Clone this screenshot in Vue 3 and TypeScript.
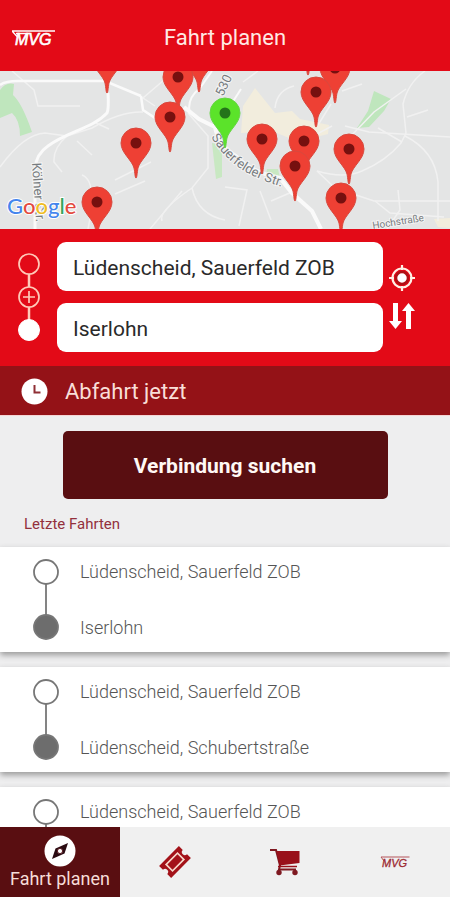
<script setup lang="ts">
import { ref } from 'vue'

interface Pin {
  x: number
  y: number
  color?: string
}

interface Trip {
  from: string
  to: string
}

const start = ref('Lüdenscheid, Sauerfeld ZOB')
const destination = ref('Iserlohn')

const pins: Pin[] = [
  { x: 107, y: -13 },
  { x: 199, y: -14 },
  { x: 178, y: 6 },
  { x: 170, y: 46 },
  { x: 136, y: 72 },
  { x: 97, y: 131 },
  { x: 225, y: 42, color: '#5be32a' },
  { x: 308, y: -31 },
  { x: 335, y: -3 },
  { x: 316, y: 21 },
  { x: 262, y: 68 },
  { x: 304, y: 70 },
  { x: 295, y: 95 },
  { x: 349, y: 78 },
  { x: 341, y: 127 },
]

const trips: Trip[] = [
  { from: 'Lüdenscheid, Sauerfeld ZOB', to: 'Iserlohn' },
  { from: 'Lüdenscheid, Sauerfeld ZOB', to: 'Lüdenscheid, Schubertstraße' },
  { from: 'Lüdenscheid, Sauerfeld ZOB', to: 'Iserlohn' },
]

function swapStops() {
  const previous = start.value
  start.value = destination.value
  destination.value = previous
}
</script>

<template>
  <div class="app">
    <header class="header">
      <svg class="brand" viewBox="0 0 44 18" role="img" aria-label="MVG">
        <path d="M0 2H43M0 2L5 7.500M4 4.500H18" stroke="#fff" stroke-width="1.3" fill="none" />
        <text x="3" y="16" class="brand-text" fill="#fff">MVG</text>
      </svg>
      <h1 class="title">Fahrt planen</h1>
    </header>

    <section class="map" aria-label="Karte">
      <svg class="map-canvas" viewBox="0 0 450 158" preserveAspectRatio="xMidYMid slice">
        <rect width="450" height="158" fill="#e4e5e5" />
        <path d="M0 19Q6 11 14 13L13 24Q22 32 32 61L20 65Q20 49 12 42L0 47Z" fill="#bfe6bd" />
        <path d="M374 20L391 28L384 40L369 56L357 57L368 40Z" fill="#bfe6bd" />
        <path d="M212 72L222 74L222 106L216 108Z" fill="#c8e8c2" />
        <path d="M267 98L278 98L280 107L266 105Z" fill="#c8e8c2" />
        <path d="M255 17L267 32L275 42L292 40L300 48L329 54L328 63L312 67L305 92L289 67L272 60L241 62L243 35Z" fill="#f2eddd" />
        <path d="M434 148L450 147V157L438 156Z" fill="#f2eddd" />
        <g fill="none" stroke="#f1f1f1" stroke-width="1.5">
          <path d="M0 96Q24 63 45 62L67 65L92 57Q121 40 143 41" />
          <path d="M67 65Q53 77 54 91L62 101M77 70L92 84M96 52L109 58M12 0L34 19L38 35H80" />
          <path d="M155 35L143 27L164 9M188 42L208 65V97L192 117Q158 140 162 150M192 117Q198 144 225 149" />
          <path d="M82 104Q98 110 88 158M150 158L182 120M115 109L151 91M115 123L145 110" />
          <path d="M225 116L247 119L239 155M260 120L271 149M271 130L292 121" />
          <path d="M317 100Q344 108 362 100Q386 90 401 72L406 62L403 33Q408 12 425 0" />
          <path d="M345 55L369 61L450 66M405 65Q435 80 438 111V150M406 18L374 41L351 65M362 13L342 20M331 33L318 54" />
          <path d="M317 100L335 117L374 130H450M332 55L317 63L309 91M402 71L378 57" />
          <path d="M243 11L258 0M275 37Q277 19 294 15M375 130L390 142L444 146M428 39L407 46M387 158L400 139L398 119" />
        </g>
        <g fill="none" stroke="#fafafa">
          <path d="M0 14Q5 10 18 10H105L141 25M141 25L143 39L155 47" stroke-width="2.5" />
          <path d="M108 22Q109 38 107 42C92 58 68 60 48 75Q36 83 35 98V158" stroke-width="3" />
          <path d="M184 36L199 48L215 56Q218 74 237 86Q251 101 280 107L292 122L312 140L321 158" stroke-width="4" />
          <path d="M190 43Q186 28 200 17L212 0M225 43L241 18" stroke-width="2" />
        </g>
        <path id="sauerfelder" d="M211 66Q222 84 238 96T292 119" fill="none" />
        <g class="street">
          <text>
            <textPath href="#sauerfelder">Sauerfelder Str.</textPath>
          </text>
          <text transform="translate(223 26) rotate(-65)">530</text>
          <text transform="translate(32 92) rotate(86)">Kölner Str.</text>
          <text class="street-small" transform="translate(373 158) rotate(-9)">Hochstraße</text>
        </g>
        <g v-for="(pin, index) in pins" :key="index" :transform="`translate(${pin.x} ${pin.y})`">
          <path
            d="M0 35C-1 35-1 30-2 25C-4 17-15 10-15 0A15 15 0 0 1 15 0C15 10 4 17 2 25C1 30 1 35 0 35Z"
            :fill="pin.color ?? '#ee4034'"
            :stroke="pin.color ? '#66d544' : '#d8493e'"
            stroke-width="1"
          />
          <circle r="5.5" :fill="pin.color ? '#24731a' : '#76100f'" />
        </g>
        <text class="google" x="7" y="143">
          <tspan fill="#4485ed">G</tspan><tspan fill="#e34a3f">o</tspan><tspan fill="#efbd25">o</tspan><tspan fill="#4485ed">g</tspan><tspan fill="#36a45a">l</tspan><tspan fill="#e34a3f">e</tspan>
        </text>
      </svg>
    </section>

    <form class="planner" @submit.prevent>
      <button class="icon-button" type="button" aria-label="Zwischenhalt hinzufügen">
        <svg width="24" height="90" viewBox="0 0 24 90" fill="none" stroke="#ffc9b8" stroke-width="1.7">
          <circle cx="12" cy="12" r="10" />
          <circle cx="12" cy="45" r="10" />
          <path d="M12 22V35M12 55V68" stroke-width="2.5" />
          <path d="M6 45H18M12 39V51" />
          <circle cx="12" cy="78" r="10.5" fill="#fff" stroke="#fff" stroke-width="1" />
        </svg>
      </button>
      <div class="fields">
        <input v-model="start" class="field" type="text" aria-label="Start" />
        <input v-model="destination" class="field" type="text" aria-label="Ziel" />
      </div>
      <div class="tools">
        <button class="icon-button" type="button" aria-label="Standort verwenden">
          <svg width="26" height="26" viewBox="0 0 26 26" fill="none" stroke="#fff0e6">
            <circle cx="13" cy="13" r="9.5" stroke-width="2.2" />
            <path d="M13 0V5M13 21V26M0 13H5M21 13H26" stroke-width="2.2" />
            <circle cx="13" cy="13" r="6" fill="#fff" stroke="#b01015" stroke-width="2.5" />
          </svg>
        </button>
        <button class="icon-button" type="button" aria-label="Start und Ziel tauschen" @click="swapStops">
          <svg width="26" height="26" viewBox="0 0 26 26" fill="#fff">
            <path d="M4 0H9V18H13L6.500 26L0 18H4ZM17 26H22V8H26L19.500 0L13 8H17Z" />
          </svg>
        </button>
      </div>
    </form>

    <button class="departure" type="button">
      <svg width="27" height="27" viewBox="0 0 27 27">
        <circle cx="13.500" cy="13.500" r="13" fill="#fff" />
        <path d="M13.500 7V14.500H19.500" fill="none" stroke="#8f2f35" stroke-width="2" />
      </svg>
      <span>Abfahrt jetzt</span>
    </button>

    <main class="content">
      <button class="search" type="button">Verbindung suchen</button>
      <h2 class="recent-title">Letzte Fahrten</h2>
      <ul class="trips">
        <li v-for="(trip, index) in trips" :key="index" class="trip">
          <svg class="trip-line" width="26" height="82" viewBox="0 0 26 82" stroke="#777" stroke-width="1.8">
            <circle cx="13" cy="13" r="12" fill="#fff" />
            <path d="M13 25V57" />
            <circle cx="13" cy="68" r="12" fill="#6d6d6d" />
          </svg>
          <div class="stops">
            <span>{{ trip.from }}</span>
            <span>{{ trip.to }}</span>
          </div>
        </li>
      </ul>
    </main>

    <nav class="tabs">
      <button class="tab active" type="button" aria-current="page">
        <svg width="32" height="32" viewBox="0 0 32 32">
          <circle cx="16" cy="16" r="15.500" fill="#fff" />
          <path d="M24 8L20.500 18.500L8 24L11.500 13.500Z" fill="#2b0b12" />
          <circle cx="16" cy="16" r="2.600" fill="#fff" stroke="#5a1a20" />
        </svg>
        <span>Fahrt planen</span>
      </button>
      <button class="tab" type="button" aria-label="Tickets">
        <svg width="32" height="32" viewBox="0 0 32 32">
          <g transform="rotate(-45 16 16)">
            <path d="M2 7.500H30V13A3 3 0 0 0 30 19V24.500H2V19A3 3 0 0 0 2 13Z" fill="#a31219" />
            <path d="M8 11.500H24V20.500H8Z" fill="#a31219" stroke="#f8d9cc" stroke-width="1.700" />
          </g>
        </svg>
      </button>
      <button class="tab" type="button" aria-label="Warenkorb">
        <svg width="32" height="28" viewBox="0 0 32 28" fill="none">
          <path d="M1 2H7L11 17.500L10 21.500H27" stroke="#7e1820" stroke-width="2" />
          <path d="M7.500 3H30.500V15L10.500 17.500Z" fill="#99101a" />
          <path d="M9 18.500H28" stroke="#99101a" stroke-width="1.500" />
          <circle cx="10" cy="24.500" r="2.700" fill="#7e1820" />
          <circle cx="26" cy="24.500" r="2.700" fill="#7e1820" />
        </svg>
      </button>
      <button class="tab" type="button" aria-label="MVG">
        <svg width="30" height="14" viewBox="0 0 30 14">
          <path d="M1 2H29.500M1 2L4 6" stroke="#b4545a" fill="none" />
          <text x="2" y="12" class="tab-brand" fill="#9c2a32">MVG</text>
        </svg>
      </button>
    </nav>
  </div>
</template>

<style>
body {
  margin: 0;
  background: #fff;
}
</style>

<style scoped>
.app {
  display: flex;
  flex-direction: column;
  height: 100vh;
  padding-bottom: 3px;
  box-sizing: border-box;
  font-family: Roboto, 'Liberation Sans', sans-serif;
  color: #222;
}

button {
  border: 0;
  padding: 0;
  background: none;
  font: inherit;
  color: inherit;
  cursor: pointer;
}

svg {
  display: block;
}

.header {
  display: grid;
  grid-template-columns: 44px 1fr 44px;
  align-items: center;
  flex: none;
  height: 71px;
  padding: 5px 12px 0;
  box-sizing: border-box;
  background: #e30a17;
  color: #ffe9e4;
}

.brand {
  width: 44px;
  height: 18px;
}

.brand-text {
  font: italic 16px 'Liberation Sans', sans-serif;
  stroke: #fff;
  stroke-width: 0.6px;
}

.title {
  margin: 0;
  text-align: center;
  font-size: 22px;
  font-weight: 400;
  line-height: 28px;
}

.map {
  flex: none;
  height: 158px;
  overflow: hidden;
}

.map-canvas {
  width: 100%;
  height: 100%;
}

.street {
  font-size: 13px;
  fill: #777c80;
  stroke: #f4f4f4;
  stroke-width: 2px;
  paint-order: stroke;
}

.street-small {
  font-size: 10px;
}

.google {
  font-family: Lato, sans-serif;
  font-size: 22px;
  font-weight: 500;
  stroke: #fff;
  stroke-width: 2px;
  paint-order: stroke;
}

.planner {
  display: grid;
  grid-template-columns: 57px 1fr 67px;
  align-items: center;
  flex: none;
  padding: 13px 0 14px;
  background: #e30a17;
}

.icon-button {
  display: flex;
  justify-content: center;
}

.fields {
  display: flex;
  flex-direction: column;
  gap: 12px;
}

.field {
  width: 100%;
  height: 49px;
  box-sizing: border-box;
  padding: 2px 16px 0;
  border: 0;
  border-radius: 9px;
  background: #fff;
  font: inherit;
  font-size: 21px;
  color: #2a2a2a;
}

.tools {
  display: flex;
  flex-direction: column;
  align-items: center;
  gap: 12px;
  padding-right: 29px;
}

.departure {
  display: flex;
  align-items: center;
  gap: 17px;
  flex: none;
  height: 50px;
  padding: 2px 21px 0;
  border-bottom: 1px solid #f5d5d5;
  background: #941217;
  color: #f9ded8;
  font-size: 22px;
}

.content {
  flex: 1;
  min-height: 0;
  overflow: hidden;
  background: #eeeeef;
}

.search {
  display: block;
  width: calc(100% - 125px);
  height: 68px;
  margin: 15px auto;
  padding-top: 2px;
  border-radius: 5px;
  background: #590e11;
  color: #fff8f4;
  font-size: 21px;
  font-weight: 700;
}

.recent-title {
  margin: 0 24px 13px;
  font-size: 15px;
  font-weight: 400;
  line-height: 20px;
  color: #93303d;
}

.trips {
  display: flex;
  flex-direction: column;
  gap: 15px;
  margin: 0;
  padding: 0;
  list-style: none;
}

.trip {
  display: flex;
  gap: 21px;
  padding: 12px 33px 11px;
  background: #fff;
  box-shadow: 0 3px 6px #999;
}

.stops {
  display: flex;
  flex-direction: column;
  justify-content: space-between;
  font-size: 18px;
  font-weight: 300;
  line-height: 26px;
  color: #555;
}

.tabs {
  display: grid;
  grid-template-columns: 120px repeat(3, 1fr);
  flex: none;
  height: 70px;
  background: #f0f0f0;
}

.tab {
  display: flex;
  flex-direction: column;
  align-items: center;
  justify-content: center;
}

.active {
  padding-top: 2px;
  background: #590e11;
  color: #f7ddd8;
  font-size: 18px;
  line-height: 24px;
}

.tab-brand {
  font: italic 11px 'Liberation Sans', sans-serif;
  stroke: #9c2a32;
  stroke-width: 0.3px;
}
</style>
